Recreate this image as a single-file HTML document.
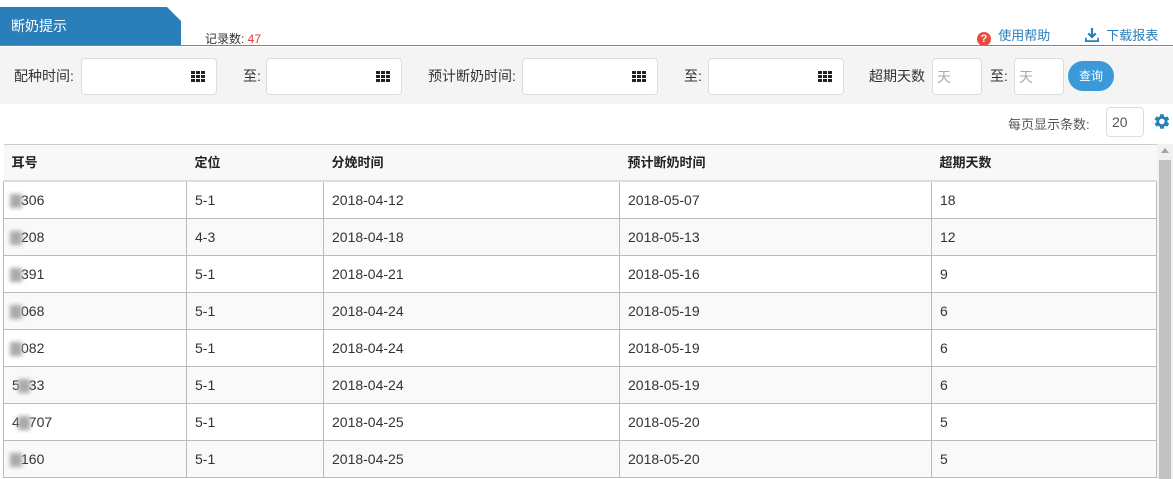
<!DOCTYPE html><html><head><meta charset="utf-8"><style>
body{margin:0;width:1173px;height:479px;overflow:hidden;background:#fff;font-family:"Liberation Sans","Noto Sans CJK SC",sans-serif;font-size:14px;color:#333;position:relative}
.a{position:absolute}
.tab{left:0;top:7px;width:181px;height:39px;background:#2a7fba;clip-path:polygon(0 0,167px 0,181px 14px,181px 100%,0 100%);color:#fff;font-size:14px;line-height:39px;padding-left:11px;box-sizing:border-box}
.line{left:0;top:45px;width:1173px;height:1px;background:#4a90c9}
.bar{left:0;top:47px;width:1173px;height:57px;background:#f5f4f5}
.inp{background:#fff;border:1px solid #ddd;border-radius:4px;box-sizing:border-box;height:37px;top:58px}
.lbl{top:66px;font-size:14px;color:#333}
table{position:absolute;left:3px;top:144px;width:1154px;border-collapse:collapse;font-size:14px;table-layout:fixed}
th{height:35px;padding:0 0 0 8px;text-align:left;background:#f8f8f8;border-bottom:2px solid #ddd;border-top:1px solid #ccc;font-weight:bold;color:#222;font-size:13px;line-height:20px}
td{height:36px;padding:0 0 0 8px;border:1px solid #bbb;color:#333;line-height:20px}
tr:nth-child(odd) td{background:#f9f9f9}
.blur{display:inline-block;width:12px;height:14px;background:#aaa;filter:blur(2px);vertical-align:middle;margin-left:-2px;margin-right:-1px}
</style></head><body>
<div class="a tab">断奶提示</div>
<div class="a" style="left:205px;top:30px;font-size:12px;color:#333">记录数: <span style="color:#e33">47</span></div>
<div class="a" style="left:977px;top:28px;font-size:13px;color:#2a7fba;line-height:16px"><span style="display:inline-block;width:14px;height:14px;border-radius:50%;background:#e74c3c;color:#fff;font-size:11px;line-height:14px;text-align:center;font-weight:bold;vertical-align:-2px">?</span>&nbsp; 使用帮助</div>
<div class="a" style="left:1085px;top:28px;font-size:13px;color:#2a7fba;line-height:16px"><svg width="14" height="14" viewBox="0 0 13 13" style="vertical-align:-2px"><path d="M6.5 0v8M3 5l3.5 3.5L10 5" stroke="#2a7fba" stroke-width="2" fill="none"/><path d="M0.8 9v3.2h11.4V9" stroke="#2a7fba" stroke-width="1.6" fill="none"/></svg>&nbsp; 下载报表</div>
<div class="a line"></div>
<div class="a bar"></div>
<div class="a lbl" style="left:14px">配种时间:</div>
<div class="a inp" style="left:81px;width:136px"></div>
<div class="a lbl" style="left:243px">至:</div>
<div class="a inp" style="left:266px;width:136px"></div>
<div class="a lbl" style="left:428px">预计断奶时间:</div>
<div class="a inp" style="left:522px;width:136px"></div>
<div class="a lbl" style="left:684px">至:</div>
<div class="a inp" style="left:708px;width:136px"></div>
<div class="a lbl" style="left:869px">超期天数</div>
<div class="a inp" style="left:932px;width:50px;color:#aaa;padding:8px 4px;font-size:14px">天</div>
<div class="a lbl" style="left:990px">至:</div>
<div class="a inp" style="left:1014px;width:50px;color:#aaa;padding:8px 4px;font-size:14px">天</div>
<div class="a" style="left:1068px;top:61px;width:46px;height:30px;border-radius:15px;background:#3a9ad9;color:#fff;font-size:12px;line-height:30px;text-align:center">查询</div>
<svg class="a" style="left:191px;top:71px" width="14" height="11"><g fill="#222"><rect x="0" y="0" width="4" height="3"/><rect x="5" y="0" width="4" height="3"/><rect x="10" y="0" width="4" height="3"/><rect x="0" y="4" width="4" height="3"/><rect x="5" y="4" width="4" height="3"/><rect x="10" y="4" width="4" height="3"/><rect x="0" y="8" width="4" height="3"/><rect x="5" y="8" width="4" height="3"/><rect x="10" y="8" width="4" height="3"/></g></svg>
<svg class="a" style="left:376px;top:71px" width="14" height="11"><g fill="#222"><rect x="0" y="0" width="4" height="3"/><rect x="5" y="0" width="4" height="3"/><rect x="10" y="0" width="4" height="3"/><rect x="0" y="4" width="4" height="3"/><rect x="5" y="4" width="4" height="3"/><rect x="10" y="4" width="4" height="3"/><rect x="0" y="8" width="4" height="3"/><rect x="5" y="8" width="4" height="3"/><rect x="10" y="8" width="4" height="3"/></g></svg>
<svg class="a" style="left:632px;top:71px" width="14" height="11"><g fill="#222"><rect x="0" y="0" width="4" height="3"/><rect x="5" y="0" width="4" height="3"/><rect x="10" y="0" width="4" height="3"/><rect x="0" y="4" width="4" height="3"/><rect x="5" y="4" width="4" height="3"/><rect x="10" y="4" width="4" height="3"/><rect x="0" y="8" width="4" height="3"/><rect x="5" y="8" width="4" height="3"/><rect x="10" y="8" width="4" height="3"/></g></svg>
<svg class="a" style="left:818px;top:71px" width="14" height="11"><g fill="#222"><rect x="0" y="0" width="4" height="3"/><rect x="5" y="0" width="4" height="3"/><rect x="10" y="0" width="4" height="3"/><rect x="0" y="4" width="4" height="3"/><rect x="5" y="4" width="4" height="3"/><rect x="10" y="4" width="4" height="3"/><rect x="0" y="8" width="4" height="3"/><rect x="5" y="8" width="4" height="3"/><rect x="10" y="8" width="4" height="3"/></g></svg>
<div class="a" style="left:1008px;top:114px;font-size:13px;color:#555">每页显示条数:</div>
<div class="a" style="left:1106px;top:107px;width:38px;height:30px;border:1px solid #ddd;border-radius:4px;box-sizing:border-box;padding:6px 5px;font-size:14px;color:#555">20</div>
<svg class="a" style="left:1152px;top:112px" width="19" height="19" viewBox="0 0 24 24"><path fill="#2a7fba" d="M19.4 13a7.5 7.5 0 000-2l2.3-1.7-2.2-3.8-2.7 1.1a7 7 0 00-1.7-1L14.7 2.8h-4.4l-.4 2.8a7 7 0 00-1.7 1L5.5 5.5 3.3 9.3 5.6 11a7.5 7.5 0 000 2l-2.3 1.7 2.2 3.8 2.7-1.1a7 7 0 001.7 1l.4 2.8h4.4l.4-2.8a7 7 0 001.7-1l2.7 1.1 2.2-3.8zM12.5 15.5a3.5 3.5 0 110-7 3.5 3.5 0 010 7z"/></svg>
<table>
<colgroup><col style="width:183px"><col style="width:137px"><col style="width:296px"><col style="width:312px"><col></colgroup>
<tr><th>耳号</th><th>定位</th><th>分娩时间</th><th>预计断奶时间</th><th>超期天数</th></tr>
<tr><td><span class="blur"></span>306</td><td>5-1</td><td>2018-04-12</td><td>2018-05-07</td><td>18</td></tr>
<tr><td><span class="blur"></span>208</td><td>4-3</td><td>2018-04-18</td><td>2018-05-13</td><td>12</td></tr>
<tr><td><span class="blur"></span>391</td><td>5-1</td><td>2018-04-21</td><td>2018-05-16</td><td>9</td></tr>
<tr><td><span class="blur"></span>068</td><td>5-1</td><td>2018-04-24</td><td>2018-05-19</td><td>6</td></tr>
<tr><td><span class="blur"></span>082</td><td>5-1</td><td>2018-04-24</td><td>2018-05-19</td><td>6</td></tr>
<tr><td>5<span class="blur"></span>33</td><td>5-1</td><td>2018-04-24</td><td>2018-05-19</td><td>6</td></tr>
<tr><td>4<span class="blur"></span>707</td><td>5-1</td><td>2018-04-25</td><td>2018-05-20</td><td>5</td></tr>
<tr><td><span class="blur"></span>160</td><td>5-1</td><td>2018-04-25</td><td>2018-05-20</td><td>5</td></tr>
</table>
<div class="a" style="left:1157px;top:144px;width:16px;height:335px;background:#f1f1f1"></div>
<div class="a" style="left:1159px;top:160px;width:12px;height:319px;background:#c1c1c1"></div>
<div class="a" style="left:1161px;top:148px;width:0;height:0;border-left:4px solid transparent;border-right:4px solid transparent;border-bottom:5px solid #a3a3a3"></div>
</body></html>
